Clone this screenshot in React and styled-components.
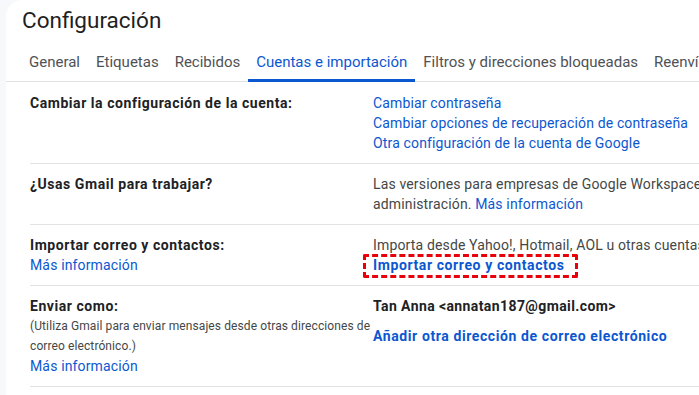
import styled, { createGlobalStyle } from "styled-components";

const GlobalStyle = createGlobalStyle`
    body {
        margin: 0;
        background: #f6f8fc;
        overflow: hidden;
        font-family: Roboto, "Liberation Sans", Arial, sans-serif;
    }
`;

const tabs = [
    "General",
    "Etiquetas",
    "Recibidos",
    "Cuentas e importación",
    "Filtros y direcciones bloqueadas",
    "Reenvío y correo POP/IMAP",
];

export default function App() {
    return (
        <>
            <GlobalStyle />
            <Panel>
                <Title>Configuración</Title>
                <TabBar>
                    {tabs.map((t) => (
                        <Tab key={t} active={t === "Cuentas e importación"}>{t}</Tab>
                    ))}
                </TabBar>

                <Table>
                    <Row>
                        <LabelCell>
                            <Label>Cambiar la configuración de la cuenta:</Label>
                        </LabelCell>
                        <ValueCell>
                            <Link>Cambiar contraseña</Link>
                            <Link>Cambiar opciones de recuperación de contraseña</Link>
                            <Link>Otra configuración de la cuenta de Google</Link>
                        </ValueCell>
                    </Row>

                    <Row>
                        <LabelCell>
                            <Label>¿Usas Gmail para trabajar?</Label>
                        </LabelCell>
                        <ValueCell>
                            <Line>Las versiones para empresas de Google Workspace incluyen direcciones de correo personalizadas y herramientas de</Line>
                            <Line>administración. <Link as="span">Más información</Link></Line>
                        </ValueCell>
                    </Row>

                    <Row>
                        <LabelCell>
                            <Label>Importar correo y contactos:</Label>
                            <Link>Más información</Link>
                        </LabelCell>
                        <ValueCell>
                            <Line>Importa desde Yahoo!, Hotmail, AOL u otras cuentas de correo web o POP.</Line>
                            <Highlight>
                                <Link strong>Importar correo y contactos</Link>
                            </Highlight>
                        </ValueCell>
                    </Row>

                    <Row>
                        <LabelCell>
                            <Label>Enviar como:</Label>
                            <Note>(Utiliza Gmail para enviar mensajes desde otras direcciones de correo electrónico.)</Note>
                            <Link>Más información</Link>
                        </LabelCell>
                        <ValueCell>
                            <Address>Tan Anna &lt;annatan187@gmail.com&gt;</Address>
                            <AddLink strong>Añadir otra dirección de correo electrónico</AddLink>
                        </ValueCell>
                    </Row>
                </Table>
            </Panel>
        </>
    );
}

const Panel = styled.div`
    margin-left: 6px;
    width: 1200px;
    min-height: 395px;
    background: #ffffff;
    border-radius: 16px 0 0 0;
`;

const Title = styled.h1`
    margin: 0;
    padding: 6px 0 0 16px;
    font-size: 22.5px;
    line-height: 28px;
    font-weight: 400;
    color: #1f1f1f;
`;

const TabBar = styled.div`
    display: flex;
    margin-top: 16px;
    padding-left: 15px;
    border-bottom: 1px solid #e3e3e3;
    white-space: nowrap;
`;

const Tab = styled.div`
    padding: 0 8px;
    height: 29px;
    line-height: 24px;
    font-size: 15px;
    color: ${(props) => (props.active ? "#0b57d0" : "#4f5255")};
    border-bottom: 3px solid ${(props) => (props.active ? "#0b57d0" : "transparent")};
    margin-bottom: -1px;
`;

const Table = styled.div`
    padding: 1px 0 0 24px;
`;

const Row = styled.div`
    display: grid;
    grid-template-columns: 343px 1fr;
    padding: 10px 0 10px;
    border-bottom: 1px solid #e3e3e3;
    font-size: 14px;
    line-height: 20px;
    letter-spacing: 0.15px;
`;

const LabelCell = styled.div`
    display: flex;
    flex-direction: column;
    align-items: flex-start;
`;

const ValueCell = styled.div`
    display: flex;
    flex-direction: column;
    align-items: flex-start;
    white-space: nowrap;
`;

const Label = styled.div`
    font-weight: 700;
    letter-spacing: 0.55px;
    color: #202124;
`;

const Note = styled.div`
    font-size: 12px;
    letter-spacing: 0.1px;
    color: #444746;
    width: 352px;
`;

const Link = styled.a`
    color: #0b57d0;
    cursor: pointer;
    font-weight: ${(props) => (props.strong ? 700 : 400)};
    letter-spacing: ${(props) => (props.strong ? "0.6px" : "inherit")};
`;

const Line = styled.div`
    color: #444746;
`;

const Highlight = styled.div`
    position: relative;
    &::after {
        content: "";
        position: absolute;
        left: -10px;
        right: -13px;
        top: -1px;
        bottom: -3px;
        border: 3px dashed #e8000b;
        border-radius: 2px;
    }
`;

const Address = styled.div`
    font-weight: 700;
    letter-spacing: 0.4px;
    color: #202124;
`;

const AddLink = styled(Link)`
    margin-top: 10px;
`;
